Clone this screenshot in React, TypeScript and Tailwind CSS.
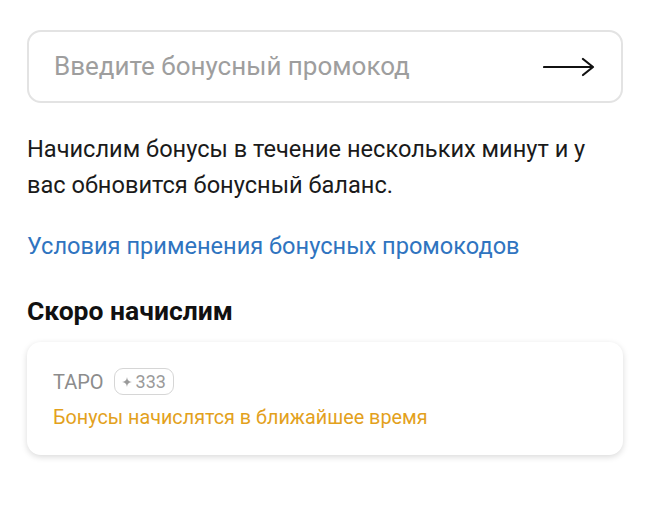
export default function App() {
  return (
    <div className="min-h-[507px] bg-white px-[27px] pt-[30px] font-['Roboto',sans-serif]">
      <div className="flex h-[73px] items-center justify-between rounded-[14px] border-2 border-[#e3e3e3] pl-[25px] pr-[26px]">
        <span className="text-[26px] text-[#9e9e9e]">Введите бонусный промокод</span>
        <svg width="52" height="24" viewBox="0 0 52 24" fill="none" stroke="#111" strokeWidth="2.2" strokeLinecap="round" strokeLinejoin="round">
          <path d="M1 12h49M40 4l10 8-10 8" />
        </svg>
      </div>

      <p className="mt-[28px] text-[23.6px] leading-[36px] text-[#1a1a1a]">
        Начислим бонусы в течение нескольких минут и у вас обновится бонусный баланс.
      </p>

      <a className="mt-[28px] block text-[23.6px] leading-[30px] text-[#2f74c0]">
        Условия применения бонусных промокодов
      </a>

      <h2 className="mt-[35px] text-[26.5px] font-bold leading-[30px] text-[#111]">Скоро начислим</h2>

      <div className="mt-[16px] flex h-[113px] flex-col justify-center gap-[6px] rounded-[14px] bg-white px-[26px] pb-[2px] pt-[4px] shadow-[0_2px_6px_rgba(0,0,0,0.15)]">
        <div className="flex items-center gap-[10px]">
          <span className="text-[20px] text-[#8c8c8c]">TAPO</span>
          <span className="flex h-[27px] items-center gap-[4px] rounded-[9px] border-[1.5px] border-[#d6d6d6] px-[7px] text-[18px] text-[#9a9a9a]">
            <svg width="10" height="10" viewBox="0 0 10 10" fill="#9a9a9a">
              <path d="M5 0 C5.6 3.4 6.6 4.4 10 5 C6.6 5.6 5.6 6.6 5 10 C4.4 6.6 3.4 5.6 0 5 C3.4 4.4 4.4 3.4 5 0Z" />
            </svg>
            333
          </span>
        </div>
        <span className="text-[19.8px] text-[#e3a11c]">Бонусы начислятся в ближайшее время</span>
      </div>
    </div>
  )
}
